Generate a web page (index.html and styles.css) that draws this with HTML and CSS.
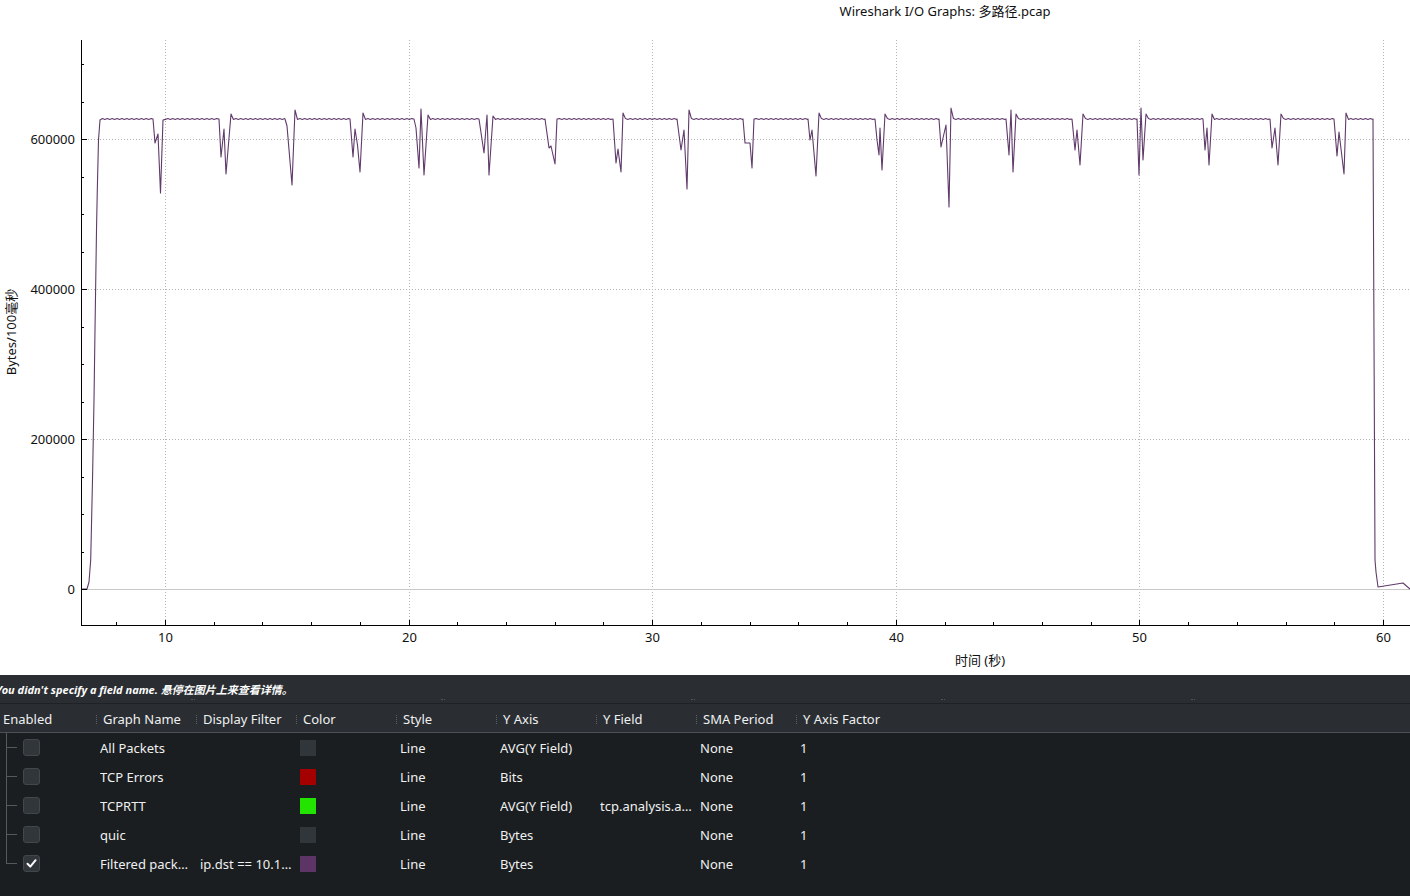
FILE: index.html
```html
<!DOCTYPE html>
<html lang="zh">
<head>
<meta charset="utf-8">
<title>Wireshark I/O Graphs</title>
<link rel="stylesheet" href="styles.css">
</head>
<body>
<div class="window">
  <div class="graph">
    <svg class="plot" id="plot" width="1410" height="675" viewBox="0 0 1410 675">
      <text class="title" x="945" y="16" text-anchor="middle">Wireshark I/O Graphs: 多路径.pcap</text>
      <g id="grid"></g>
      <line class="zero" x1="82" y1="589.5" x2="1410" y2="589.5"></line>
      <path id="series" class="series" d=""></path>
      <g id="ticks"></g>
      <line class="axis" x1="81.5" y1="40" x2="81.5" y2="625.5"></line>
      <line class="axis" x1="81" y1="625.5" x2="1410" y2="625.5"></line>
      <g id="labels"></g>
      <text class="axis-title" x="980" y="665" text-anchor="middle">时间 (秒)</text>
      <text class="axis-title" transform="translate(16 332) rotate(-90)" text-anchor="middle">Bytes/100毫秒</text>
    </svg>
  </div>
  <div class="panel">
    <div class="status">
      <span class="status-text">You didn't specify a field name. 悬停在图片上来查看详情。</span>
      <div class="grips">
        <span class="grip"></span><span class="grip"></span><span class="grip"></span><span class="grip"></span><span class="grip"></span>
      </div>
    </div>
    <div class="table">
      <div class="thead">
        <div class="th">Enabled</div>
        <div class="th">Graph Name</div>
        <div class="th">Display Filter</div>
        <div class="th">Color</div>
        <div class="th">Style</div>
        <div class="th">Y Axis</div>
        <div class="th">Y Field</div>
        <div class="th">SMA Period</div>
        <div class="th">Y Axis Factor</div>
      </div>
      <div class="tbody">
        <div class="tr">
          <div class="td tree"><span class="check"></span></div>
          <div class="td">All Packets</div>
          <div class="td"></div>
          <div class="td"><span class="swatch swatch-grey"></span></div>
          <div class="td">Line</div>
          <div class="td">AVG(Y Field)</div>
          <div class="td"></div>
          <div class="td">None</div>
          <div class="td">1</div>
        </div>
        <div class="tr">
          <div class="td tree"><span class="check"></span></div>
          <div class="td">TCP Errors</div>
          <div class="td"></div>
          <div class="td"><span class="swatch swatch-red"></span></div>
          <div class="td">Line</div>
          <div class="td">Bits</div>
          <div class="td"></div>
          <div class="td">None</div>
          <div class="td">1</div>
        </div>
        <div class="tr">
          <div class="td tree"><span class="check"></span></div>
          <div class="td">TCPRTT</div>
          <div class="td"></div>
          <div class="td"><span class="swatch swatch-green"></span></div>
          <div class="td">Line</div>
          <div class="td">AVG(Y Field)</div>
          <div class="td">tcp.analysis.a…</div>
          <div class="td">None</div>
          <div class="td">1</div>
        </div>
        <div class="tr">
          <div class="td tree"><span class="check"></span></div>
          <div class="td">quic</div>
          <div class="td"></div>
          <div class="td"><span class="swatch swatch-grey"></span></div>
          <div class="td">Line</div>
          <div class="td">Bytes</div>
          <div class="td"></div>
          <div class="td">None</div>
          <div class="td">1</div>
        </div>
        <div class="tr">
          <div class="td tree tree-last"><span class="check checked"><svg width="15" height="15" viewBox="0 0 15 15"><path d="M3.5 7.8 L6.3 10.6 L11.6 4.2" fill="none" stroke="#fcfcfc" stroke-width="2" stroke-linecap="round" stroke-linejoin="round"/></svg></span></div>
          <div class="td">Filtered pack…</div>
          <div class="td">ip.dst == 10.1…</div>
          <div class="td"><span class="swatch swatch-purple"></span></div>
          <div class="td">Line</div>
          <div class="td">Bytes</div>
          <div class="td"></div>
          <div class="td">None</div>
          <div class="td">1</div>
        </div>
      </div>
    </div>
  </div>
</div>
<script src="script.js"></script>
</body>
</html>
```

FILE: styles.css
```css
html, body {
  margin: 0;
  padding: 0;
  width: 1410px;
  height: 896px;
  overflow: hidden;
  background: #1b1e20;
  font-family: "Noto Sans", "Noto Sans CJK SC", sans-serif;
}

.window {
  display: flex;
  flex-direction: column;
  width: 1410px;
  height: 896px;
}

.graph {
  height: 675px;
  background: #ffffff;
  flex: none;
}

.plot {
  display: block;
}

.title,
.axis-title,
.tick-label {
  font-family: "Noto Sans", "Noto Sans CJK SC", sans-serif;
  font-size: 13px;
  fill: #111111;
}

.axis {
  stroke: #000000;
  stroke-width: 1;
  shape-rendering: crispEdges;
}

.tick {
  stroke: #000000;
  stroke-width: 1;
  shape-rendering: crispEdges;
}

.gridline {
  stroke: #b4b4b4;
  stroke-width: 1;
  stroke-dasharray: 1 2;
  shape-rendering: crispEdges;
}

.zero {
  stroke: #c8c8c8;
  stroke-width: 1;
  shape-rendering: crispEdges;
}

.series {
  fill: none;
  stroke: #603a6a;
  stroke-width: 1.1;
  stroke-linejoin: round;
}

.panel {
  flex: 1;
  display: flex;
  flex-direction: column;
  background: #1b1e20;
  color: #eff0f1;
}

.status {
  position: relative;
  height: 28px;
  background: #2a2e32;
  border-bottom: 1px solid #1f2225;
  display: flex;
  align-items: center;
  overflow: hidden;
}

.status-text {
  margin-left: -4px;
  font-size: 11px;
  font-weight: bold;
  font-style: italic;
  white-space: nowrap;
  color: #fcfcfc;
}

.grips {
  position: absolute;
  left: 0;
  bottom: 2px;
  display: flex;
  gap: 246px;
  padding-left: 191px;
}

.grip {
  width: 4px;
  height: 1px;
  border-top: 1px dotted #50555b;
}

.thead {
  display: grid;
  grid-template-columns: repeat(9, 100px);
  height: 28px;
  background: #2a2e32;
  border-bottom: 1px solid #4d5157;
  font-size: 13px;
  color: #eff0f1;
}

.th {
  position: relative;
  display: flex;
  align-items: center;
  padding-left: 3px;
  padding-top: 2px;
  white-space: nowrap;
}

.th + .th::before {
  content: "";
  position: absolute;
  left: -4px;
  top: 11px;
  height: 9px;
  border-left: 1px dotted #5d6167;
}

.tbody {
  display: flex;
  flex-direction: column;
}

.tr {
  display: grid;
  grid-template-columns: repeat(9, 100px);
  height: 29px;
  font-size: 13px;
}

.td {
  position: relative;
  display: flex;
  align-items: center;
  white-space: nowrap;
  overflow: hidden;
}

.tree::before {
  content: "";
  position: absolute;
  left: 6px;
  top: 0;
  bottom: 0;
  border-left: 1px solid #55595e;
}

.tree-last::before {
  bottom: 14px;
}

.tree::after {
  content: "";
  position: absolute;
  left: 7px;
  top: 14px;
  width: 10px;
  border-top: 1px solid #55595e;
}

.check {
  position: relative;
  margin-left: 23px;
  width: 15px;
  height: 15px;
  border: 1px solid #42474c;
  border-radius: 3px;
  background: #31363b;
  display: flex;
}

.swatch {
  width: 16px;
  height: 16px;
}

.swatch-grey { background: #31363b; }
.swatch-red { background: #a40000; }
.swatch-green { background: #22e400; }
.swatch-purple { background: #5c3566; }
```

FILE: script.js
```js
(function () {
  var NS = "http://www.w3.org/2000/svg";
  function el(parent, name, attrs, text) {
    var e = document.createElementNS(NS, name);
    for (var k in attrs) e.setAttribute(k, attrs[k]);
    if (text !== undefined) e.textContent = text;
    parent.appendChild(e);
    return e;
  }
  var grid = document.getElementById("grid");
  var ticks = document.getElementById("ticks");
  var labels = document.getElementById("labels");
  var X0 = 165, PX = 24.36;
  function tx(t) { return X0 + (t - 10) * PX; }

  for (var t = 10; t <= 60; t += 10) {
    var x = Math.round(tx(t)) + 0.5;
    el(grid, "line", { "class": "gridline", x1: x, y1: 40, x2: x, y2: 625 });
    el(ticks, "line", { "class": "tick", x1: x, y1: 620, x2: x, y2: 625 });
    el(labels, "text", { "class": "tick-label", x: x, y: 642, "text-anchor": "middle" }, String(t));
  }
  for (var m = 8; m <= 60; m += 2) {
    if (m % 10 === 0) continue;
    var xm = Math.round(tx(m)) + 0.5;
    el(ticks, "line", { "class": "tick", x1: xm, y1: 622, x2: xm, y2: 625 });
  }
  var yv = [[139, "600000"], [289, "400000"], [439, "200000"], [589, "0"]];
  yv.forEach(function (p) {
    var y = p[0] + 0.5;
    if (p[1] !== "0") el(grid, "line", { "class": "gridline", x1: 82, y1: y, x2: 1410, y2: y });
    el(ticks, "line", { "class": "tick", x1: 81, y1: y, x2: 87, y2: y });
    el(labels, "text", { "class": "tick-label", x: 75, y: p[0] + 5, "text-anchor": "end" }, p[1]);
  });
  for (var k = 1; k <= 14; k++) {
    if (k % 4 === 0) continue;
    var ym = Math.round(589 - 37.5 * k) + 0.5;
    el(ticks, "line", { "class": "tick", x1: 81, y1: ym, x2: 84, y2: ym });
  }

  var D = [
    [[81, 589], [87, 589], [89, 582], [90.7, 560], [92.5, 480], [94, 400], [95, 330], [96.5, 230], [97.3, 190], [98.5, 140], [100, 120]],
    153,
    [[155, 143], [158, 134], [160.5, 193], [163, 120]],
    219,
    [[221, 157], [224, 129], [226, 174], [231, 114]],
    285,
    [[287, 126], [292, 185], [295, 110]],
    350,
    [[353, 157], [355, 129], [357.5, 145], [360, 172], [363, 113]],
    414,
    [[416, 128], [419, 168], [421, 109], [424, 175], [428, 115]],
    479,
    [[484, 153], [487, 115], [489, 175], [493, 116]],
    545,
    [[549, 148], [551, 146], [555, 164], [557, 119]],
    613,
    [[616, 163], [618, 149], [621, 172], [623, 113]],
    677,
    [[681, 150], [684, 130], [687, 189], [689, 110]],
    743,
    [[745, 143], [750, 143], [752, 168], [754, 119]],
    808,
    [[810, 140], [812, 130], [816, 176], [819, 113]],
    875,
    [[877, 140], [879, 155], [880, 128], [882, 170], [885, 114]],
    939,
    [[941, 147], [943, 138], [946, 125], [949, 207], [951, 108]],
    1006,
    [[1009, 155], [1011, 110], [1013, 172], [1016, 114]],
    1072,
    [[1075, 150], [1077, 130], [1080, 165], [1083, 114]],
    1137,
    [[1139, 175], [1141, 108], [1143, 160], [1146, 114]],
    1203,
    [[1205, 150], [1207, 128], [1209, 165], [1212, 114]],
    1270,
    [[1272, 148], [1275, 128], [1278, 165], [1281, 114]],
    1334,
    [[1337, 156], [1339, 132], [1344, 174], [1346, 113]],
    1373,
    [[1375, 560], [1376, 572], [1378, 587], [1403, 583], [1410, 589]]
  ];
  var pts = [], lastX = 0, ri = 0;
  D.forEach(function (item) {
    if (typeof item === "number") {
      for (var x = lastX + 2.436; x < item; x += 2.436) {
        pts.push([x, 119 + ((ri++ % 2) ? 0.4 : -0.4)]);
      }
      pts.push([item, 119]);
      lastX = item;
    } else {
      item.forEach(function (p) { pts.push(p); lastX = p[0]; });
    }
  });
  var d = pts.map(function (p, i) {
    return (i ? "L" : "M") + p[0].toFixed(2) + " " + p[1].toFixed(2);
  }).join(" ");
  document.getElementById("series").setAttribute("d", d);
})();
```
